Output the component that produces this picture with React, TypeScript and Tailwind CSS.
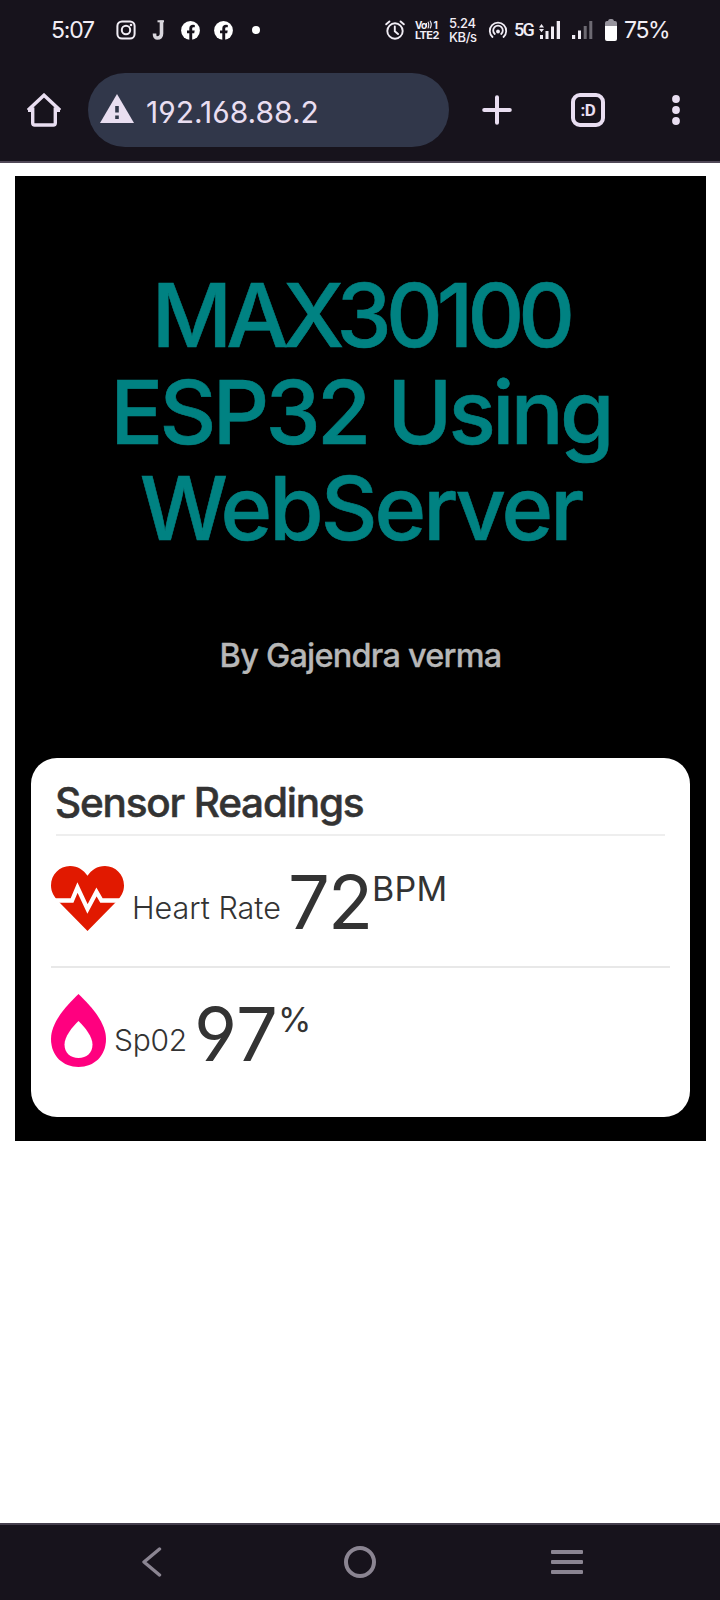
import React from "react";

function StatusBar() {
  return (
    <div className="flex h-[60px] items-center whitespace-nowrap text-[#f1edf5]">
      <span className="ml-[51px] w-[65px] text-[23px] leading-none tracking-[-1.2px]">5:07</span>
      <svg className="h-5 w-5" viewBox="0 0 20 20" fill="none" stroke="currentColor" strokeWidth="2">
        <rect x="1.4" y="1.4" width="17.2" height="17.2" rx="4.6" />
        <circle cx="10" cy="10" r="4.2" />
        <circle cx="15" cy="5" r="1.3" fill="currentColor" stroke="none" />
      </svg>
      <svg className="ml-[16px] h-5 w-3" viewBox="0 0 12 20" fill="none" stroke="#d9d6dd">
        <path d="M9.5 .5V13.5C9.5 17 7.5 18 5 18C3.5 18 2.5 16.5 2.5 13.5" strokeWidth="3.6" />
        <path d="M5.5 1.3H12" strokeWidth="2" />
      </svg>
      <FacebookIcon className="ml-[17px]" />
      <FacebookIcon className="ml-[14px]" />
      <span className="ml-[19px] h-2 w-2 rounded-full bg-white" />
      <svg className="ml-[125px] h-5 w-5" viewBox="0 0 20 20" fill="none" stroke="currentColor" strokeWidth="1.9" strokeLinecap="round">
        <circle cx="10" cy="11" r="7.7" />
        <path d="M9.8 6.5V11.2L13 14M1.2 4.3L4.4 1.5M18.8 4.3L15.6 1.5" />
      </svg>
      <div className="ml-[10px] flex w-[25px] flex-col gap-[1px]">
        <div className="flex h-[9px] items-center">
          <span className="text-[10px] font-bold leading-none tracking-[-0.8px]">Vo</span>
          <svg className="h-[9px] w-[7px]" viewBox="0 0 7 9" fill="none" stroke="currentColor" strokeWidth="1.1">
            <path d="M.5 3V7M2 1.8Q3.5 5 2 8.4M4 .8Q6.5 4.5 4 8.4" />
          </svg>
          <span className="text-[10px] font-bold leading-none">1</span>
        </div>
        <span className="text-[11px] font-bold leading-[10px] tracking-[-0.6px]">LTE2</span>
      </div>
      <div className="-mt-px ml-[9px] flex w-[29px] flex-col text-[13px] font-medium leading-[14px] tracking-[-0.3px]">
        <span>5.24</span>
        <span className="tracking-[-0.4px]">KB/s</span>
      </div>
      <svg className="ml-[10px] h-5 w-5" viewBox="0 0 20 20" fill="none" stroke="currentColor" strokeWidth="1.8" strokeLinecap="round">
        <path d="M4.5 17A8.2 8.2 0 1 1 15.5 17M6.8 14A4.8 4.8 0 1 1 13.2 14" />
        <circle cx="10" cy="11.5" r="1.9" fill="currentColor" stroke="none" />
      </svg>
      <span className="ml-[6px] w-[20px] font-['Roboto',sans-serif] text-[18px] font-medium leading-none tracking-[-1.8px]">5G</span>
      <svg className="ml-[5px] h-5 w-[22px]" viewBox="0 0 22 20" fill="currentColor">
        <path d="M0 7.5L2.5 4L5 7.5ZM0 9L2.5 12.2L5 9ZM1 15H4V19H1ZM6.5 11H9.5V19H6.5ZM12 6.5H15V19H12ZM17.7 1H21V19H17.7Z" />
      </svg>
      <svg className="ml-[11px] h-5 w-[21px]" viewBox="0 0 21 20" fill="currentColor">
        <path d="M0 15H3.2V19H0ZM6 10.5H9V19H6Z" />
        <path opacity=".4" d="M11.7 6H14.7V19H11.7ZM17.3 1H20.3V19H17.3Z" />
      </svg>
      <svg className="ml-[12px] h-[22px] w-3" viewBox="0 0 12 22">
        <path d="M0 7V4Q0 2 2 2H3Q3.5 0 5 0H7Q8.5 0 9 2H10Q12 2 12 4V7Z" fill="#96939c" />
        <path d="M0 7H12V20Q12 22 10 22H2Q0 22 0 20Z" fill="#fff" />
      </svg>
      <span className="ml-[7px] text-[23px] leading-none tracking-[-1.4px]">75%</span>
    </div>
  );
}

function FacebookIcon({ className }: { className: string }) {
  return (
    <svg className={"h-[19px] w-[19px] " + className} viewBox="0 0 19 19">
      <circle cx="9.5" cy="9.5" r="9.4" fill="#fff" />
      <path d="M8.3 19V12.3H6V9.4H8.3V7.4C8.3 5 9.7 3.7 12 3.7L13.8 3.9V6.3H12.5C11.5 6.3 11.2 6.9 11.2 7.7V9.4H13.7L13.2 12.3H11.2V19Z" fill="#17131c" />
    </svg>
  );
}

function BrowserBar() {
  return (
    <div className="flex h-[103px] items-start border-b-2 border-[#504857] pt-[13px] text-[#e9def1]">
      <svg className="ml-[27px] mt-[20px] h-[34px] w-[34px]" viewBox="0 0 34 34" fill="none" stroke="currentColor" strokeWidth="3.4">
        <path d="M1 17.2L17 2.2L33 17.2M5.7 14.5V30Q5.7 32 7.7 32H26.3Q28.3 32 28.3 30V14.5M1 17.2H5.7M33 17.2H28.3" />
      </svg>
      <div className="ml-[27px] flex h-[74px] w-[361px] items-center rounded-full bg-[#31374a]">
        <svg className="-mt-[4px] ml-[12px] h-[29px] w-[34px]" viewBox="0 0 34 29">
          <path d="M17 0L34 29H0Z" fill="currentColor" />
          <path d="M15.2 12H18.8V18.5H15.2ZM15.2 21.5H18.8V25H15.2Z" fill="#31374a" />
        </svg>
        <span className="ml-[12px] mt-[3px] whitespace-nowrap text-[30px] leading-none [font-feature-settings:'cv03','cv04']">192.168.88.2</span>
      </div>
      <svg className="ml-[33px] mt-[22px] h-[30px] w-[30px]" viewBox="0 0 30 30" stroke="currentColor" strokeWidth="4" strokeLinecap="round">
        <path d="M15 2.2V27.8M2.2 15H27.8" />
      </svg>
      <div className="ml-[59px] mt-[20px] flex h-[34px] w-[34px] items-center justify-center rounded-[9px] border-[4px] border-[#e9def1] font-['Roboto',sans-serif] text-[17px] font-bold leading-none">
        <span className="tracking-[-0.5px]">:D</span>
      </div>
      <svg className="ml-[67px] mt-[22px] h-[30px] w-2" viewBox="0 0 8 30" fill="currentColor">
        <circle cx="4" cy="4" r="3.9" />
        <circle cx="4" cy="15" r="3.9" />
        <circle cx="4" cy="26" r="3.9" />
      </svg>
    </div>
  );
}

function HeartIcon() {
  return (
    <svg className="h-[65px] w-[73px]" viewBox="0 0 73 65">
      <path d="M36.5 65L9 37C3 31 0 26 0 19.5C0 8.5 8.5 0 19 0C27 0 32.5 4 36.5 9.8C40.5 4 46 0 54 0C64.5 0 73 8.5 73 19.5C73 26 70 31 64 37Z" fill="#e11900" />
      <path d="M2 34.5H21L26.5 21.5L36.5 43L45.5 26L50.5 34.5H71" fill="none" stroke="#fff" strokeWidth="4.3" />
    </svg>
  );
}

function DropIcon() {
  return (
    <svg className="h-[73px] w-[55px]" viewBox="0 0 55 73">
      <path d="M27.5 0C39 11 55 28 55 45C55 62 43 73 27.5 73S0 62 0 45C0 28 16 11 27.5 0Z" fill="#ff007f" />
      <path d="M27.5 27C34 33 41.5 43 41.5 50.5C41.5 59 35.5 64 27.5 64S13.5 59 13.5 50.5C13.5 43 21 33 27.5 27Z" fill="#fff" />
    </svg>
  );
}

function Page() {
  return (
    <main className="flex-1 bg-white pl-[15px] pt-[13px]">
      <div className="h-[965px] w-[691px] bg-black px-4 pt-[91px]">
        <h1 className="flex flex-col items-center whitespace-nowrap text-[88px] font-medium leading-[96.5px] text-[#008282] [-webkit-text-stroke:0.6px_#008282] [font-feature-settings:'cv03','cv04']">
          <span className="tracking-[-5.9px]">MAX30100</span>
          <span className="tracking-[-3.7px]">ESP32 Using</span>
          <span className="tracking-[-3px]">WebServer</span>
        </h1>
        <p className="mt-[79px] text-center text-[32.5px] font-medium leading-[40px] tracking-[-0.8px] text-[#b7b7b7] [-webkit-text-stroke:0.3px_#b7b7b7]">By Gajendra verma</p>
        <section className="mt-[82px] h-[359px] w-[659px] rounded-[26px] bg-white text-[#333]">
          <h2 className="mx-[25px] h-[78px] border-b-2 border-[#eee] pt-[25px] text-[40.5px] font-medium leading-none tracking-[-1.2px] [-webkit-text-stroke:0.5px_#333]">
            <span className="-ml-px">Sensor Readings</span>
          </h2>
          <div className="mx-[20px] flex h-[132px] items-start whitespace-nowrap border-b-2 border-[#e8e8e8] leading-none">
            <div className="mt-[30px]"><HeartIcon /></div>
            <span className="ml-[8px] mt-[57px] w-[156px] text-[30.5px] font-light">Heart Rate</span>
            <span className="mt-[29px] w-[84px] text-[74px] tracking-[-2px]">72</span>
            <span className="mt-[36px] text-[34px] tracking-[0.3px]">BPM</span>
          </div>
          <div className="mx-[20px] flex items-start whitespace-nowrap leading-none">
            <div className="mt-[26px]"><DropIcon /></div>
            <span className="ml-[8px] mt-[57px] w-[80px] text-[30px] font-light tracking-[-0.3px]">Sp02</span>
            <span className="mr-[-2px] mt-[29px] w-[86px] text-[74px] tracking-[2px] [font-feature-settings:'cv03','cv04']">97</span>
            <span className="mt-[35px] text-[34px]">%</span>
          </div>
        </section>
      </div>
    </main>
  );
}

function NavigationBar() {
  return (
    <nav className="flex h-[77px] items-start border-t-2 border-[#46404e] text-[#8b8592]">
      <svg className="ml-[141px] mt-[22px] h-[30px] w-[22px]" viewBox="0 0 22 30" fill="none" stroke="currentColor" strokeWidth="3.4" strokeLinecap="round" strokeLinejoin="round">
        <path d="M18.5 2L3 15L18.5 28" />
      </svg>
      <div className="ml-[181px] mt-[21px] h-8 w-8 rounded-full border-[4px] border-[#8b8592]" />
      <div className="ml-[175px] mt-[25px] flex w-[32px] flex-col gap-[6px]">
        <span className="h-1 rounded-[1px] bg-[#8b8592]" />
        <span className="h-1 rounded-[1px] bg-[#8b8592]" />
        <span className="h-1 rounded-[1px] bg-[#8b8592]" />
      </div>
    </nav>
  );
}

export default function App() {
  return (
    <div className="flex h-[1600px] w-[720px] flex-col overflow-hidden bg-[#17131c] font-['Inter','Liberation_Sans',sans-serif]">
      <StatusBar />
      <BrowserBar />
      <Page />
      <NavigationBar />
    </div>
  );
}
